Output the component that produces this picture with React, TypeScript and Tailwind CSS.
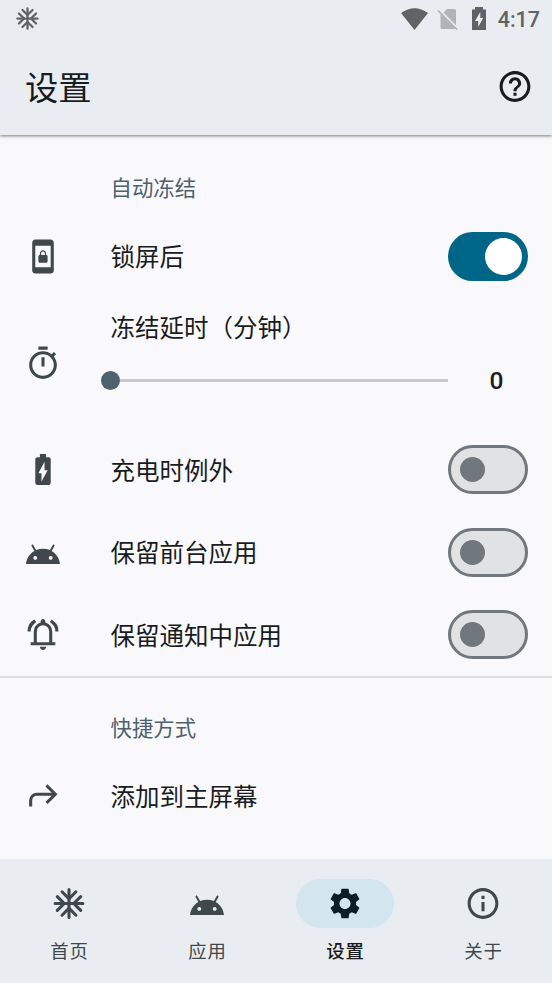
import { useState, type ReactNode } from 'react';

interface IconProps {
  className?: string;
}

interface GlyphProps extends IconProps {
  d: string;
}

function Glyph({ d, className = 'h-[37px] w-[38px]' }: GlyphProps) {
  return (
    <svg viewBox="0 0 24 24" fill="currentColor" fillRule="evenodd" className={`block shrink-0 ${className}`}>
      <path d={d} />
    </svg>
  );
}

const PATHS = {
  help: 'M11 18h2v-2h-2v2zm1-16C6.48 2 2 6.48 2 12s4.48 10 10 10 10-4.48 10-10S17.52 2 12 2zm0 18c-4.41 0-8-3.59-8-8s3.59-8 8-8 8 3.59 8 8-3.59 8-8 8zm0-14c-2.21 0-4 1.79-4 4h2c0-1.1.9-2 2-2s2 .9 2 2c0 2-3 1.75-3 5h2c0-2.25 3-2.5 3-5 0-2.21-1.79-4-4-4z',
  info: 'M11 7h2v2h-2zm0 4h2v6h-2zm1-9C6.48 2 2 6.48 2 12s4.48 10 10 10 10-4.48 10-10S17.52 2 12 2zm0 18c-4.41 0-8-3.59-8-8s3.59-8 8-8 8 3.59 8 8-3.59 8-8 8z',
  screenLock:
    'M17 1H7c-1.1 0-2 .9-2 2v18c0 1.1.9 2 2 2h10c1.1 0 2-.9 2-2V3c0-1.1-.9-2-2-2zm0 18H7V5h10v14zM10 16h4c.55 0 1-.45 1-1v-3c0-.55-.45-1-1-1v-1c0-1.11-.9-2-2-2-1.11 0-2 .9-2 2v1c-.55 0-1 .45-1 1v3c0 .55.45 1 1 1zm.8-6c0-.66.54-1.2 1.2-1.2.66 0 1.2.54 1.2 1.2v1h-2.4v-1z',
  timer:
    'M15 1H9v2h6V1zm-4 13h2V8h-2v6zm8.03-6.61l1.42-1.42c-.43-.51-.9-.99-1.41-1.41l-1.42 1.42C16.07 4.74 14.12 4 12 4c-4.97 0-9 4.03-9 9s4.02 9 9 9 9-4.03 9-9c0-2.12-.74-4.07-1.97-5.61zM12 20c-3.87 0-7-3.13-7-7s3.13-7 7-7 7 3.13 7 7-3.13 7-7 7z',
  battery:
    'M15.67 4H14V2h-4v2H8.33C7.6 4 7 4.6 7 5.33v15.33C7 21.4 7.6 22 8.33 22h7.33c.74 0 1.34-.6 1.34-1.33V5.33C17 4.6 16.4 4 15.67 4zM11 20v-5.5H9L13 7v5.5h2L11 20z',
  android:
    'M17.6 10.98l1.84-3.18c.16-.31.04-.69-.26-.85-.29-.15-.65-.06-.83.22l-1.88 3.24c-2.86-1.21-6.08-1.21-8.94 0L5.65 7.17c-.19-.29-.58-.38-.87-.2-.28.18-.37.54-.22.83L6.4 10.98C3.3 12.75 1.28 15.94 1 19.5h22c-.28-3.56-2.3-6.75-5.4-8.52zM7 16.75c-.69 0-1.25-.56-1.25-1.25s.56-1.25 1.25-1.25 1.25.56 1.25 1.25-.56 1.25-1.25 1.25zm10 0c-.69 0-1.25-.56-1.25-1.25s.56-1.25 1.25-1.25 1.25.56 1.25 1.25-.56 1.25-1.25 1.25z',
  bell: 'M4 19v-2h2v-7q0-2.075 1.25-3.687T10.5 4.2v-.7q0-.625.438-1.062T12 2t1.063.438T13.5 3.5v.7q2 .5 3.25 2.113T18 10v7h2v2zm8 3q-.825 0-1.412-.587T10 20h4q0 .825-.587 1.413T12 22m-4-5h8v-7q0-1.65-1.175-2.825T12 6T9.175 7.175T8 10zM2 10q0-2.500 1.113-4.587T6.400 2.300l1.175 1.600q-1.500 1.100-2.587 2.775T4 10zm18 0q0-2-.888-3.375T16.426 3.900l1.175-1.600q1.875 1.375 3.288 3.113T22 10z',
  gear: 'M19.14 12.94c.04-.3.06-.61.06-.94 0-.32-.02-.64-.07-.94l2.03-1.58c.18-.14.23-.41.12-.61l-1.92-3.32c-.12-.22-.37-.29-.59-.22l-2.39.96c-.5-.38-1.03-.7-1.62-.94l-.36-2.54c-.04-.24-.24-.41-.48-.41h-3.84c-.24 0-.43.17-.47.41l-.36 2.54c-.59.24-1.13.57-1.62.94l-2.39-.96c-.22-.08-.47 0-.59.22L2.74 8.87c-.12.21-.08.47.12.61l2.03 1.58c-.05.3-.09.63-.09.94s.02.64.07.94l-2.03 1.58c-.18.14-.23.41-.12.61l1.92 3.32c.12.22.37.29.59.22l2.39-.96c.5.38 1.03.7 1.62.94l.36 2.54c.05.24.24.41.48.41h3.84c.24 0 .44-.17.47-.41l.36-2.54c.59-.24 1.13-.56 1.62-.94l2.39.96c.22.08.47 0 .59-.22l1.92-3.32c.12-.22.07-.47-.12-.61l-2.01-1.58zM12 15.6c-1.98 0-3.6-1.62-3.6-3.6s1.62-3.6 3.6-3.6 3.6 1.62 3.6 3.6-1.62 3.6-3.6 3.6z',
};

function SnowflakeIcon({ className = 'h-[37px] w-[38px]' }: IconProps) {
  return (
    <svg
      viewBox="0 0 24 24"
      fill="none"
      stroke="currentColor"
      strokeWidth="2"
      strokeLinecap="round"
      className={`block shrink-0 ${className}`}
    >
      <path d="M12 3v18M3 12h18" />
      <path d="M7.500 4.400L12 8.900l4.500-4.500M7.500 19.600L12 15.100l4.500 4.500M4.400 7.500L8.900 12l-4.500 4.500M19.600 7.500L15.100 12l4.500 4.500" />
    </svg>
  );
}

function ShortcutIcon() {
  return (
    <svg viewBox="0 0 24 24" fill="none" stroke="currentColor" strokeWidth="2" className="block h-[37px] w-[38px] shrink-0">
      <path d="M4 18.500V14.500a4 4 0 0 1 4-4h11.600" />
      <path d="M15 5.500L20 10.500l-5 5" strokeLinecap="square" />
    </svg>
  );
}

function StatusBar() {
  return (
    <div className="flex h-[37px] shrink-0 items-center justify-between pl-[14px] pr-3 text-[#606264]">
      <SnowflakeIcon className="size-[27px]" />
      <div className="flex items-center">
        <svg viewBox="0 0 27 22" className="h-[22px] w-[27px]" fill="currentColor">
          <path d="M0 5Q13.500-4.500 27 5L13.500 22z" />
        </svg>
        <svg viewBox="0 0 21 22" className="ml-[9px] h-[22px] w-[21px]">
          <path d="M10 1h7.500q1.500 0 1.500 1.500v14.700L6.500 4.500zM3.500 6L18 20.500q-.3.500-1 .500H5q-1.500 0-1.500-1.500z" fill="#b0b4b7" />
          <path d="M1 2.500l19 19" stroke="#b0b4b7" strokeWidth="1.700" />
        </svg>
        <svg viewBox="0 0 14 23" className="ml-[14px] h-[23px] w-[14px]" fill="currentColor" fillRule="evenodd">
          <path d="M3 0h8v2.500h3V23H0V2.500h3zM8.300 5L3 14h3.200v6L11.200 11H8.300z" />
        </svg>
        <span className="ml-3 pt-[2px] text-[21.500px] font-medium leading-none">4:17</span>
      </div>
    </div>
  );
}

interface ToggleProps {
  on: boolean;
  label: string;
  onToggle: () => void;
}

function Toggle({ on, label, onToggle }: ToggleProps) {
  return (
    <button
      type="button"
      role="switch"
      aria-checked={on}
      aria-label={label}
      onClick={onToggle}
      className={`flex h-[49px] w-20 shrink-0 items-center rounded-full ${
        on ? 'justify-end bg-[#006688] pr-[6px]' : 'border-[3px] border-[#70787d] bg-[#e1e2e4] pl-[9px]'
      }`}
    >
      <span className={`rounded-full ${on ? 'size-[37px] bg-white' : 'size-[25px] bg-[#70787d]'}`} />
    </button>
  );
}

interface RowProps {
  icon: ReactNode;
  title: string;
  children?: ReactNode;
}

function Row({ icon, title, children }: RowProps) {
  return (
    <div className="flex h-[82.500px] shrink-0 items-center px-6">
      <div className="w-[86.500px] shrink-0 text-[#40484c]">{icon}</div>
      <span className="flex-1 pt-[4px] text-[24.500px] leading-[36px]">{title}</span>
      {children}
    </div>
  );
}

function SectionTitle({ children }: { children: ReactNode }) {
  return <h2 className="pl-[110.500px] text-[21.400px] leading-[32px] text-[#4e616d]">{children}</h2>;
}

interface NavItemProps {
  icon: ReactNode;
  label: string;
  active?: boolean;
}

function NavItem({ icon, label, active = false }: NavItemProps) {
  return (
    <button
      type="button"
      className={`flex flex-1 flex-col items-center pt-[20px] ${active ? 'text-[#0a1e28]' : 'text-[#40484c]'}`}
    >
      <span className={`flex h-[49px] w-[98px] items-center justify-center rounded-full ${active ? 'bg-[#d3e5ef]' : ''}`}>
        {icon}
      </span>
      <span
        className={`mt-[10px] pl-[0.800px] text-[18.400px] leading-[28px] tracking-[0.800px] ${
          active ? 'font-medium text-[#191c1e]' : ''
        }`}
      >
        {label}
      </span>
    </button>
  );
}

export default function App() {
  const [afterLock, setAfterLock] = useState(true);
  const [skipCharging, setSkipCharging] = useState(false);
  const [keepForeground, setKeepForeground] = useState(false);
  const [keepNotifying, setKeepNotifying] = useState(false);

  return (
    <div className="flex h-[983px] w-[552px] flex-col overflow-hidden bg-[#f9f9fc] font-[Roboto,'Noto_Sans_CJK_SC',sans-serif] text-[#191c1e]">
      <header className="relative shrink-0 bg-[#e9edf2] shadow-[0_1px_3px_rgba(0,0,0,0.5)]">
        <StatusBar />
        <div className="flex h-[98px] items-center justify-between pl-[25px] pr-[18px]">
          <h1 className="pt-[5px] text-[33.300px] leading-[50px]">设置</h1>
          <Glyph d={PATHS.help} />
        </div>
      </header>

      <main className="flex min-h-0 flex-1 flex-col pt-[38.400px]">
        <SectionTitle>自动冻结</SectionTitle>
        <div className="h-[9.800px] shrink-0" />
        <Row icon={<Glyph d={PATHS.screenLock} />} title="锁屏后">
          <Toggle on={afterLock} label="锁屏后" onToggle={() => setAfterLock(!afterLock)} />
        </Row>

        <div className="flex h-[131px] shrink-0 items-center px-6">
          <div className="w-[86.500px] shrink-0 text-[#40484c]">
            <Glyph d={PATHS.timer} />
          </div>
          <div className="flex-1 pb-[18px]">
            <p className="pt-px text-[24.500px] leading-[36px]">冻结延时（分钟）</p>
            <div className="mt-[16px] flex h-[36px] items-center">
              <div className="-ml-[9.500px] size-[19px] shrink-0 rounded-full bg-[#4e616d]" />
              <div className="h-[3px] w-[328px] bg-[#c9cacc]" />
              <span className="flex-1 pl-[17px] pt-px text-center text-[24.500px] font-medium leading-[36px]">0</span>
            </div>
          </div>
        </div>

        <Row icon={<Glyph d={PATHS.battery} />} title="充电时例外">
          <Toggle on={skipCharging} label="充电时例外" onToggle={() => setSkipCharging(!skipCharging)} />
        </Row>
        <Row icon={<Glyph d={PATHS.android} />} title="保留前台应用">
          <Toggle on={keepForeground} label="保留前台应用" onToggle={() => setKeepForeground(!keepForeground)} />
        </Row>
        <Row icon={<Glyph d={PATHS.bell} />} title="保留通知中应用">
          <Toggle on={keepNotifying} label="保留通知中应用" onToggle={() => setKeepNotifying(!keepNotifying)} />
        </Row>

        <div className="h-[37px] shrink-0 border-t-2 border-[#dcdddf]" />
        <SectionTitle>快捷方式</SectionTitle>
        <div className="h-[9.600px] shrink-0" />
        <Row icon={<ShortcutIcon />} title="添加到主屏幕" />
      </main>

      <nav className="flex h-[124px] shrink-0 bg-[#e9edf2]">
        <NavItem icon={<SnowflakeIcon />} label="首页" />
        <NavItem icon={<Glyph d={PATHS.android} />} label="应用" />
        <NavItem icon={<Glyph d={PATHS.gear} />} label="设置" active />
        <NavItem icon={<Glyph d={PATHS.info} />} label="关于" />
      </nav>
    </div>
  );
}
